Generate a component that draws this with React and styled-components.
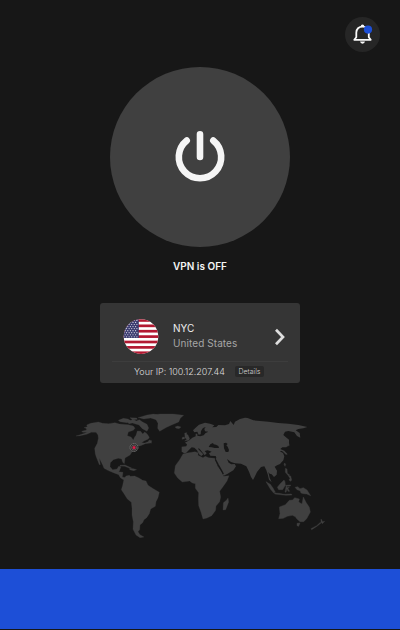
import React from 'react';
import styled, { createGlobalStyle } from 'styled-components';

const GlobalStyle = createGlobalStyle`
  * { box-sizing: border-box; }
  body { margin: 0; background: #171717; font-family: Inter, sans-serif; }
  button { font: inherit; border: 0; padding: 0; color: inherit; }
`;

const Screen = styled.main`
  display: flex;
  flex-direction: column;
  align-items: center;
  width: 400px;
  height: 630px;
  padding-bottom: 1px;
  background: #171717;
  color: #f5f5f5;
  overflow: hidden;
`;

const Header = styled.header`
  display: flex;
  justify-content: flex-end;
  width: 100%;
  height: 67px;
  padding: 17px 20px 0;
`;

const NotificationButton = styled.button`
  display: grid;
  place-items: center;
  width: 35px;
  height: 35px;
  border-radius: 50%;
  background: #262626;
`;

const PowerButton = styled.button`
  display: grid;
  place-items: center;
  flex: none;
  width: 180px;
  height: 180px;
  border-radius: 50%;
  background: #404040;
`;

const Status = styled.p`
  height: 14px;
  margin: 12px 0 30px;
  font-size: 10px;
  line-height: 14px;
  font-weight: 600;
`;

const LocationCard = styled.section`
  flex: none;
  width: 200px;
  height: 80px;
  padding: 0 12px;
  border-radius: 3px;
  background: #353535;
`;

const LocationRow = styled.div`
  display: flex;
  align-items: center;
  height: 59px;
  padding: 9px 3px 0 11px;
  border-bottom: 1px solid #3d3d3d;
`;

const Place = styled.div`
  flex: 1;
  padding: 0 0 1px 14px;
`;

const PlaceLine = styled.div`
  font-size: 10px;
  line-height: 15px;
  letter-spacing: ${({ $muted }) => ($muted ? '0.08px' : '0')};
  color: ${({ $muted }) => ($muted ? '#a6a6a6' : '#eeeeee')};
`;

const AddressRow = styled.div`
  display: flex;
  align-items: center;
  justify-content: center;
  gap: 10px;
  height: 19px;
  padding-right: 2px;
  font-size: 9px;
  font-weight: 300;
  letter-spacing: -0.02px;
  color: #dedede;
`;

const DetailsButton = styled.button`
  width: 29px;
  height: 11px;
  border-radius: 2px;
  background: #282828;
  && {
    font-size: 7px;
    line-height: 11px;
    letter-spacing: 0;
    color: #d0d0d0;
  }
`;

const MapArea = styled.div`
  width: 260px;
  height: 140px;
  margin: 22px 0 24px;
`;

const Graphic = styled.svg`
  display: block;
  flex: none;
`;

const Footer = styled.footer`
  flex: none;
  width: 100%;
  height: 60px;
  background: #1d4fd7;
`;

const Bell = () => (
  <Graphic width="23" height="23" viewBox="0 0 23 23" fill="none">
    <path d="M3.3 16.8h16.4l-1.9-2.5V9.7c0-3.7-2.4-6.1-6.2-6.1S5.3 6 5.3 9.7v4.6z" stroke="#fafafa" strokeWidth="1.8" strokeLinejoin="round" />
    <path d="M9.7 3.8q0-2.3 1.8-2.3t1.8 2.3zM9 18.6h5q-.4 2.1-2.5 2.1T9 18.6z" fill="#fafafa" />
    <circle cx="17" cy="6.6" r="4.1" fill="#1d4fd7" />
  </Graphic>
);

const Power = () => (
  <Graphic width="60" height="60" viewBox="0 0 60 60" fill="none" stroke="#f5f5f5" strokeWidth="6.6" strokeLinecap="round">
    <path d="M30 7.2v22.8M16.7 13.6a21.2 21.2 0 1 0 26.6 0" />
  </Graphic>
);

const stars = Array.from({ length: 9 }, (_, row) =>
  Array.from({ length: row % 2 ? 5 : 6 }, (_, col) => [
    0.9 + (row % 2 ? 1.3 : 0) + col * 2.6,
    1.4 + row * 2.05,
  ])
).flat();

const Flag = () => (
  <Graphic width="36" height="36" viewBox="0 0 36 36">
    <defs>
      <clipPath id="flag-disc"><circle cx="18" cy="17.6" r="17.3" /></clipPath>
    </defs>
    <g clipPath="url(#flag-disc)">
      <path fill="#fff" d="M0 0h36v36H0z" />
      {Array.from({ length: 7 }, (_, i) => (
        <rect key={i} y={0.1 + i * 5.385} width="36" height="2.7" fill="#b31932" />
      ))}
      <path fill="#3b3b70" d="M0 0h15.8v18.9H0z" />
      {stars.map(([x, y]) => <circle key={`${x}-${y}`} cx={x} cy={y} r=".62" fill="#d9d9e5" />)}
    </g>
  </Graphic>
);

const Chevron = () => (
  <Graphic width="10" height="18" viewBox="0 0 10 18" fill="none">
    <path d="m1 1.7 7 7.3-7 7.3" stroke="#dedede" strokeWidth="2.7" />
  </Graphic>
);

const WorldMap = () => (
  <Graphic width="260" height="140" viewBox="0 0 780 420" fill="#404040">
    <g stroke="#404040" strokeWidth=".8" strokeLinejoin="round">
      <path d="M18 93 35 88 52 82 38 82 35 79 50 75 48 70 42 68 52 65 50 60 62 55 85 51 98 55 116 56 135 53 148 57 175 59 190 63 195 70 190 76 175 81 172 92 183 96 190 105 194 96 198 91 202 78 212 79 218 87 224 81 231 86 238 97 235 102 222 108 215 113 224 114 240 108 241 114 226 116 212 122 204 124 193 131 186 141 180 150 165 159 163 176 158 172 155 162 145 160 130 164 121 173 120 185 128 194 141 192 146 184 153 185 148 198 146 200 159 202 157 216 168 218 174 222 160 224 151 218 146 209 130 203 113 196 102 190 98 180 88 160 91 179 88 179 80 159 76 148 74 130 82 115 85 100 84 90 78 82 64 82 50 88 30 92Z" />
      <path d="m145 46 15-6 14 2 10 6-13 5-21-3ZM172 51l18-8 9 5 9-4 10 7 13 7 5 11-5 10-14-8-10-11-20-6-10 2ZM180 38l20 1 2 4-14 2ZM204 38l27-8 20-3 15 4-13 5-15 4-17 2-11-3Z" />
      <path d="M241 31 270 27 310 27 341 31 331 40 326 51 305 60 290 67 277 74 269 79 263 70 264 55 258 44 242 39ZM315 66l8-3 10 3-6 5-8-1Z" />
      <path d="m150 181 15-1 20 9-6 1-15-6-14-1ZM179 190l12 1 9 3-9 3-12-3ZM237 105l8 2-1 8-9-3Z" />
      <path d="M162 222 168 213 178 211 181 214 194 213 207 219 218 226 228 228 234 241 250 251 268 262 264 278 258 290 256 304 242 312 238 326 230 338 222 344 218 353 210 360 209 374 204 380 210 389 222 396 210 398 198 390 189 373 190 350 186 330 186 310 184 292 172 282 162 266 154 254 158 241Z" />
    </g>
    <g transform="translate(255 0)">
      <path d="M80 125 94 124 96 118 90 113 103 106 112 98 122 94 122 86 127 86 127 92 136 94 146 91 151 85 160 80 150 79 148 72 152 66 144 69 138 78 137 88 131 89 127 80 118 82 114 76 121 69 132 59 150 53 165 56 178 61 172 67 184 66 190 60 210 61 222 57 226 48 236 60 240 50 255 42 270 38 278 39 295 46 315 48 340 50 370 54 400 56 430 60 457 66 445 70 430 72 422 76 434 84 436 98 426 93 418 82 400 78 390 80 385 90 392 96 402 104 402 118 394 127 382 127 376 132 388 137 398 148 393 149 381 138 374 139 384 144 388 154 385 166 375 177 366 181 359 185 366 197 365 209 357 216 350 208 344 206 340 201 344 218 350 232 342 224 338 208 334 196 328 184 318 186 306 201 300 214 294 225 288 216 282 200 274 184 266 180 258 176 240 175 228 171 216 162 221 173 229 178 239 177 243 184 235 196 218 206 206 212 199 198 188 179 181 164 184 158 182 153 166 152 162 145 170 140 158 136 149 138 155 145 149 151 142 142 136 134 131 129 130 133 145 148 139 153 132 148 126 136 118 128 110 127 101 136 94 143 88 145 80 140Z" />
      <path d="M84 147 96 144 120 140 129 143 129 151 144 158 151 154 161 158 179 160 188 184 199 199 206 214 222 212 216 228 204 245 194 259 197 276 194 290 183 303 182 316 170 332 156 339 144 342 138 322 131 302 130 280 131 263 121 250 121 236 112 234 104 228 82 231 68 219 58 204 61 182 74 164ZM219 279l2 12-9 23-8 1 1-22 9-7ZM89 84l7-1-2 4 5 3 5 11-3 5-12 2 6-5-5-5ZM82 97l6-1 1 5-8 2Z" stroke="#404040" strokeWidth=".8" strokeLinejoin="round" />
      <path fill="#171717" d="m161 126 5-8 8-4 2 4 7 1 7 4 2 6-13 0-9-2ZM206 115l7-2 5 4-4 4 4 4 4 10-2 6-8 0-5-11Z" />
      <path fill="none" stroke="#171717" strokeWidth="4" d="m181 163 9 17 8 14 7 13" />
    </g>
    <g transform="translate(510 0)" stroke="#404040" strokeWidth="1.2" strokeLinejoin="round">
      <path d="m78 230 13 8 8 11 7 13-5 2-10-12ZM112 247l8-10 12-12 3 5 1 11-8 13-12 0ZM104 264l13 1 15 3 22-1 2 3-18 1-34-4ZM137 241l15-1-1 3-11 1 1 4 7-2-4 5 5 8-5 0-3-8-3 11-3-1 3-16ZM136 190l5 2 1 13 7 5-5 1-8-9ZM144 211l8 2 3 12-3 4-5-4 3-5ZM165 247l8-2 7 6 10-3 11 7 11 17-12-5-10-1-7-2-3-7-9-3Z" />
      <path d="M118 306 136 299 148 286 158 285 164 278 178 282 176 291 186 297 190 276 198 292 208 307 211 321 200 341 191 350 180 350 170 341 166 335 157 331 142 334 130 340 116 341 120 326ZM171 355l9-1-4 10-5-2ZM213 371l17-9 10-9 4 0-12 10-17 11ZM243 342l5 8 6-1-7 7-4-4ZM134 174l3 4-2 6-3-6ZM141 112l4 0 3 9-6 3Z" />
    </g>
    <circle cx="192" cy="127.5" r="12" fill="#292929" />
    <g fill="none" stroke="#8c8c8c" strokeWidth="2">
      <circle cx="192" cy="127.5" r="12" strokeDasharray="5 1.5" />
      <circle cx="192" cy="127.5" r="7.5" stroke="#7c686c" />
    </g>
    <circle cx="192" cy="127.5" r="4.5" fill="#e11d48" />
  </Graphic>
);

export default function App() {
  return (
    <>
      <GlobalStyle />
      <Screen>
        <Header>
          <NotificationButton aria-label="Notifications"><Bell /></NotificationButton>
        </Header>
        <PowerButton aria-label="Turn on VPN"><Power /></PowerButton>
        <Status>VPN is OFF</Status>
        <LocationCard>
          <LocationRow>
            <Flag />
            <Place>
              <PlaceLine>NYC</PlaceLine>
              <PlaceLine $muted>United States</PlaceLine>
            </Place>
            <Chevron />
          </LocationRow>
          <AddressRow>
            <span>Your IP: 100.12.207.44</span>
            <DetailsButton>Details</DetailsButton>
          </AddressRow>
        </LocationCard>
        <MapArea><WorldMap /></MapArea>
        <Footer />
      </Screen>
    </>
  );
}
